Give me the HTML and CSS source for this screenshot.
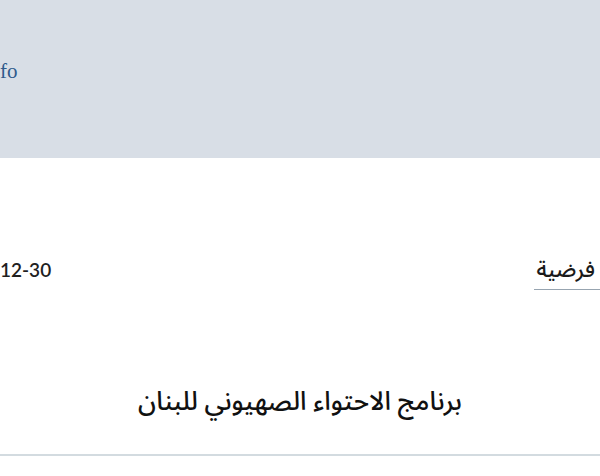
FILE: index.html
```html
<!DOCTYPE html>
<html lang="ar" dir="rtl">
<head>
<meta charset="utf-8">
<title>برنامج الاحتواء الصهيوني للبنان</title>
<link rel="stylesheet" href="styles.css">
</head>
<body>
<header class="top">
  <a class="site" href="#" dir="ltr">fo</a>
</header>
<main class="article">
  <div class="meta">
    <a class="cat" href="#">فرضية</a>
    <span class="date" dir="ltr">12-30</span>
  </div>
  <h1 class="title">برنامج الاحتواء الصهيوني للبنان</h1>
  <hr class="rule">
</main>
</body>
</html>
```
FILE: styles.css
```css
html, body {
  margin: 0;
  padding: 0;
  background: #ffffff;
  overflow: hidden;
}
body {
  width: 600px;
  height: 476px;
  font-family: "Noto Sans Arabic", "DejaVu Sans", sans-serif;
}
.top {
  height: 158px;
  background: #d8dee6;
  display: flex;
  align-items: center;
  justify-content: flex-end;
  box-sizing: border-box;
  padding-bottom: 16px;
}
.site {
  font-family: "Liberation Serif", serif;
  font-size: 21px;
  color: #2f5b8c;
  text-decoration: none;
}
.article {
  display: flex;
  flex-direction: column;
}
.meta {
  display: flex;
  justify-content: space-between;
  align-items: flex-start;
  margin-top: 98px;
}
.cat {
  font-family: "Noto Sans Arabic", "DejaVu Sans", sans-serif;
  font-size: 22px;
  font-weight: 500;
  line-height: 28px;
  color: #1a1a1a;
  text-decoration: none;
  border-bottom: 1px solid #97a4b0;
  padding: 0 5px 5px 2px;
}
.date {
  font-family: Lato, sans-serif;
  font-weight: 600;
  font-size: 19px;
  line-height: 28px;
  color: #1f1f1f;
}
.title {
  font-family: "Noto Sans Arabic", "DejaVu Sans", sans-serif;
  font-weight: 500;
  font-size: 26px;
  line-height: 31px;
  color: #111;
  text-align: center;
  margin: 96px 0 0 0;
}
.rule {
  border: 0;
  border-top: 2px solid #d3dbe0;
  margin: 37px 0 0 0;
}
```
